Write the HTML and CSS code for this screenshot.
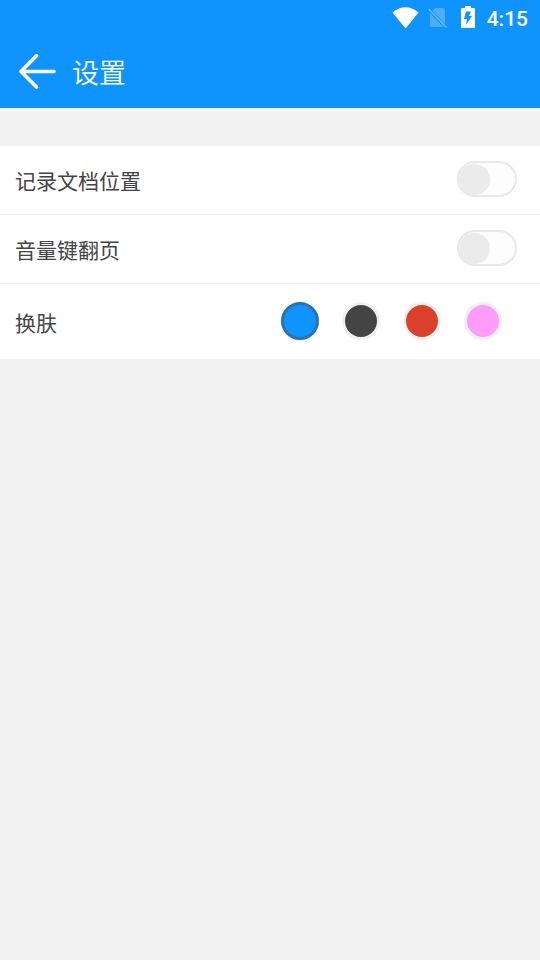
FILE: index.html
```html
<!DOCTYPE html>
<html lang="zh-CN">
<head>
<meta charset="utf-8">
<meta name="viewport" content="width=device-width, initial-scale=1">
<title>设置</title>
<link rel="stylesheet" href="styles.css">
</head>
<body>
<header class="top">
  <div class="status">
    <svg class="wifi" width="28" height="24" viewBox="0 0 28 24" aria-hidden="true"><path fill="#fff" d="M.5 6.5Q13.500-4 26.500 6.5L13.500 22.500Z"/></svg>
    <svg class="sim" width="20" height="24" viewBox="0 0 20 24" aria-hidden="true"><path fill="#4dadfe" d="M7 2H15.500Q17 2 17 3.500V18L4.500 5ZM2 7L15.500 21H3.500Q2 21 2 19.500Z"/><path stroke="#68b9ff" stroke-width="1.5" d="M.6 3L18.500 21.500"/></svg>
    <svg class="battery" width="14" height="24" viewBox="0 0 14 24" aria-hidden="true"><path fill="#fff" d="M4 0H10V2H13Q14 2 14 3V21Q14 22 13 22H1Q0 22 0 21V3Q0 2 1 2H4Z"/><path fill="#0f94fe" d="M5 5.500H10L8 10H11L5 19L6 13H3Z"/></svg>
    <span class="time">4:15</span>
  </div>
  <div class="bar">
    <button class="back" type="button" aria-label="返回">
      <svg width="38" height="36" viewBox="0 0 38 36" aria-hidden="true"><path fill="none" stroke="#fff" stroke-width="3.6" stroke-linecap="round" stroke-linejoin="round" d="M17.500 1.800L2 17.500L17.500 33M2.500 17.500H35"/></svg>
    </button>
    <h1 class="title">设置</h1>
  </div>
</header>
<main class="settings">
  <div class="row">
    <label class="name" for="position">记录文档位置</label>
    <input class="switch" id="position" type="checkbox" role="switch">
  </div>
  <div class="row">
    <label class="name" for="volume">音量键翻页</label>
    <input class="switch" id="volume" type="checkbox" role="switch">
  </div>
  <div class="row row-skin" role="radiogroup" aria-labelledby="skin">
    <span class="name" id="skin">换肤</span>
    <div class="swatches">
      <input class="swatch blue" type="radio" name="skin" aria-label="蓝色" checked>
      <input class="swatch dark" type="radio" name="skin" aria-label="黑色">
      <input class="swatch red" type="radio" name="skin" aria-label="红色">
      <input class="swatch pink" type="radio" name="skin" aria-label="粉色">
    </div>
  </div>
</main>
</body>
</html>
```
FILE: styles.css
```css
* {
  box-sizing: border-box;
}

body {
  margin: 0;
  min-height: 100vh;
  background: #f1f1f1;
  color: #444;
  font-family: "Noto Sans CJK SC", sans-serif;
}

.top {
  background: #0f94fe;
  color: #fff;
  border-bottom: 4px solid #f6f6f6;
}

.status {
  display: flex;
  align-items: center;
  justify-content: flex-end;
  height: 36px;
  padding-right: 12px;
}

.wifi {
  margin-right: 8px;
}

.sim {
  margin-right: 13px;
}

.battery {
  margin-right: 12px;
}

.time {
  font: 500 21px/36px Roboto, sans-serif;
  padding-top: 2px;
}

.bar {
  display: flex;
  align-items: center;
  gap: 15px;
  height: 72px;
  padding-left: 19px;
}

.back {
  padding: 0;
  border: 0;
  background: none;
}

.back svg {
  display: block;
}

.title {
  margin: 0;
  font-size: 27px;
  line-height: 40px;
  font-weight: 350;
}

.settings {
  margin-top: 34px;
  background: #fff;
}

.row {
  display: flex;
  align-items: center;
  justify-content: space-between;
  height: 69px;
  padding: 0 23px 2px 15px;
  border-bottom: 1px solid #ededed;
  font-size: 21px;
  line-height: 32px;
}

.name {
  padding-top: 2px;
}

.row-skin {
  height: 75px;
  padding-right: 38px;
  border-bottom: 0;
}

.switch,
.swatch {
  appearance: none;
  margin: 0;
}

.switch {
  display: flex;
  align-items: center;
  width: 60px;
  height: 36px;
  border: 2px solid #e8e8e8;
  border-radius: 18px;
  background: #fdfdfd;
}

.switch::before {
  content: "";
  width: 31px;
  height: 31px;
  border-radius: 50%;
  background: #ebebeb;
}

.switch:checked {
  justify-content: flex-end;
}

.swatches {
  display: flex;
  gap: 23px;
}

.swatch {
  width: 38px;
  height: 38px;
  border: 3px solid #f0f0f0;
  border-radius: 50%;
}

.swatch:checked {
  border-color: #2773b1;
}

.blue {
  background: #0f94fe;
}

.dark {
  background: #444;
}

.red {
  background: #d9412b;
}

.pink {
  background: #ff9cfb;
}
```
